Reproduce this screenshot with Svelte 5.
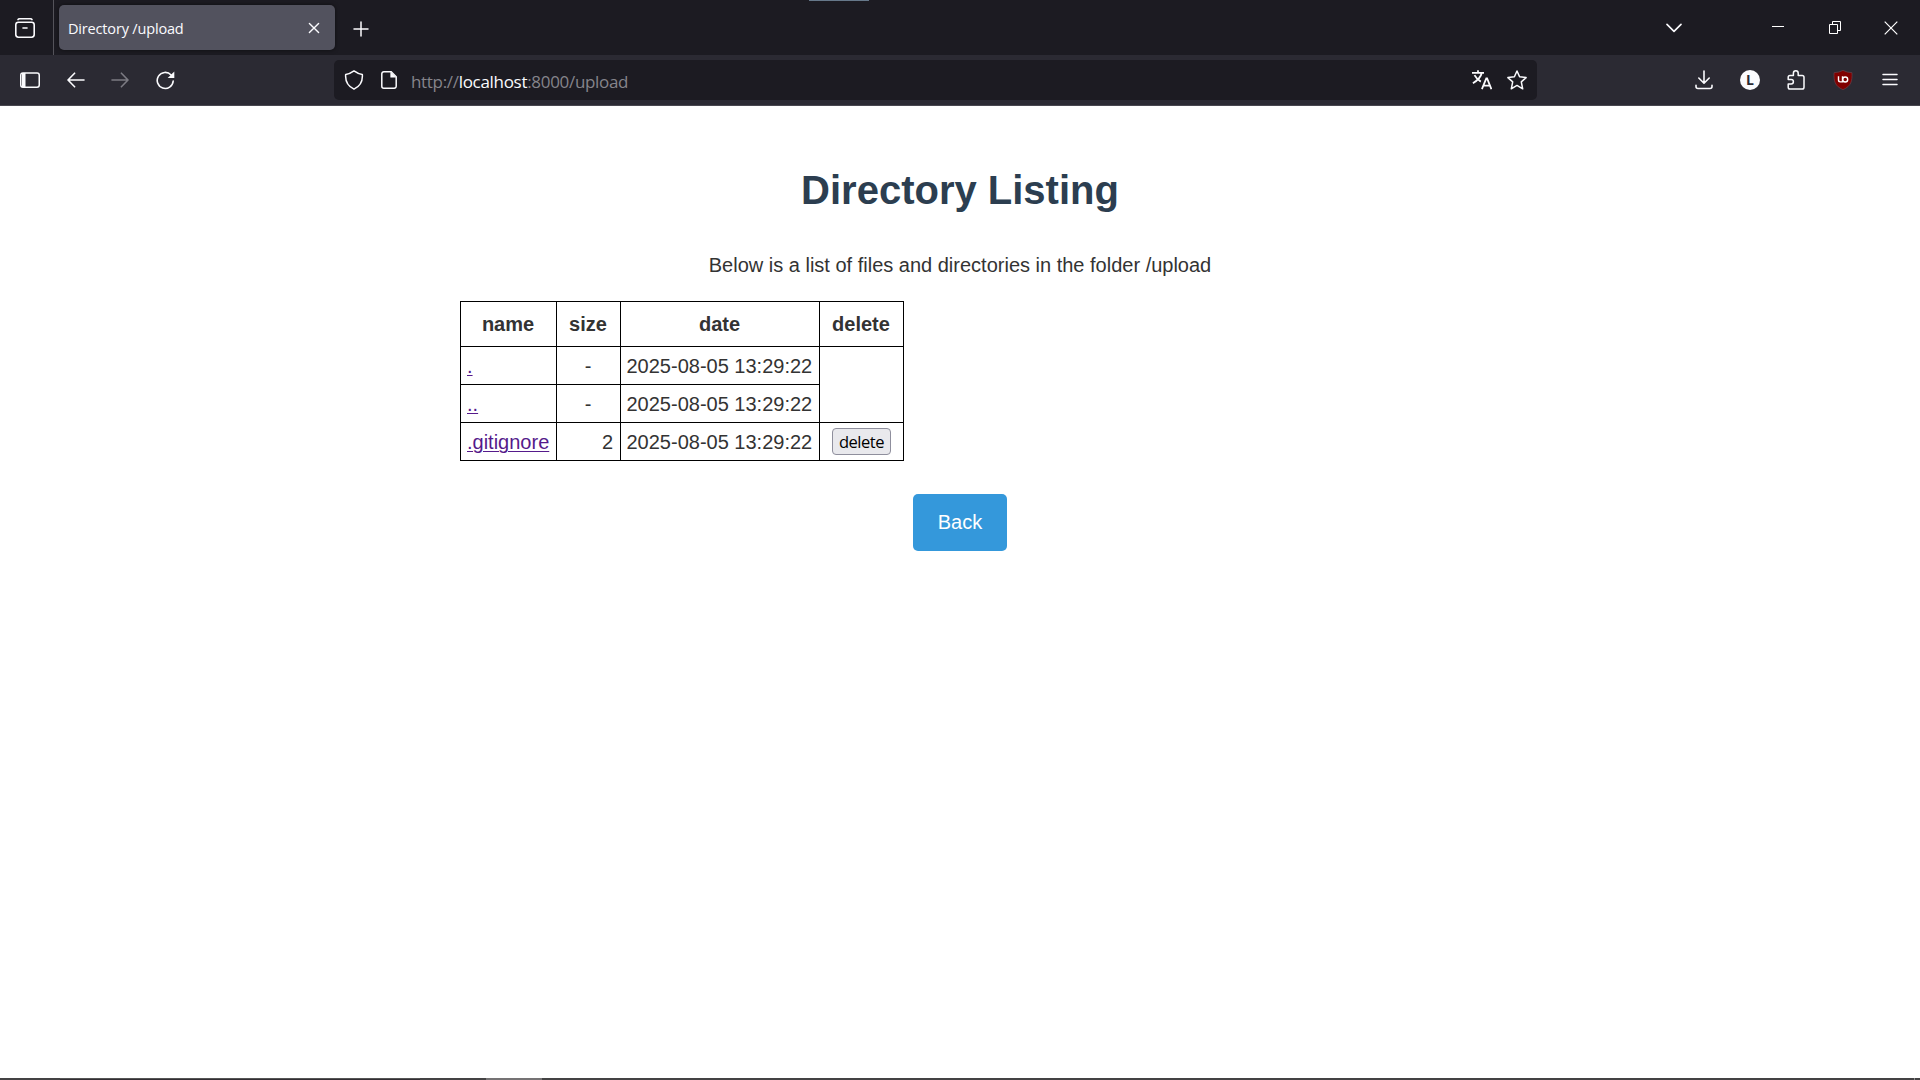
<script>
  const pageTitle = 'Directory /upload';
  const rows = [
    { name: '.', size: '-', date: '2025-08-05 13:29:22' },
    { name: '..', size: '-', date: '2025-08-05 13:29:22' },
    { name: '.gitignore', size: '2', date: '2025-08-05 13:29:22', file: true },
  ];
</script>

<div class="window">
  <header class="tabs">
    <div class="accent"></div>
    <div class="archive">
      <svg width="20" height="20" viewBox="0 0 20 20" fill="none" stroke="#fbfbfe" stroke-width="1.6" stroke-linecap="round">
        <path d="M3 1.6Q3.4.8 4.500.8h11q1.100 0 1.500.8" /><rect x=".8" y="4.200" width="18.400" height="15" rx="2.600" /><path d="M8 10h4" />
      </svg>
    </div>
    <div class="tab">
      <span class="tab-title">{pageTitle}</span>
      <svg width="12" height="12" viewBox="0 0 12 12" stroke="#fbfbfe" stroke-width="1.4" stroke-linecap="round"><path d="M1.400 1.400l9.200 9.200M10.600 1.400l-9.200 9.200" /></svg>
    </div>
    <svg class="plus" width="16" height="16" viewBox="0 0 16 16" stroke="#fbfbfe" stroke-width="1.5" stroke-linecap="round"><path d="M8 1v14M1 8h14" /></svg>
    <div class="window-controls">
      <svg class="chevron" width="16" height="10" viewBox="0 0 16 10" fill="none" stroke="#fbfbfe" stroke-width="1.6" stroke-linecap="round" stroke-linejoin="round"><path d="M1 1.400l7 7 7-7" /></svg>
      <svg class="minimize" width="12" height="13" viewBox="0 0 12 13" stroke="#fff"><path d="M0 5.500h12" /></svg>
      <svg class="restore" width="12" height="13" viewBox="0 0 12 13" fill="none" stroke="#fff"><path d="M.5 3.500h8v9h-8zM3.500 3V.5h8v9H9" /></svg>
      <svg class="close" width="14" height="14" viewBox="0 0 14 14" stroke="#fff" stroke-width="1.2"><path d="M.7.7l12.600 12.600M13.300.7L.7 13.300" /></svg>
    </div>
  </header>

  <nav class="toolbar">
    <div class="nav-buttons">
      <svg width="20" height="16" viewBox="0 0 20 16"><rect x=".75" y=".95" width="18.500" height="14.200" rx="2.200" fill="none" stroke="#fbfbfe" stroke-width="1.5" /><path d="M2 1h3.500v14H2z" fill="#fbfbfe" /></svg>
      <svg width="18" height="16" viewBox="0 0 18 16" fill="none" stroke="#fbfbfe" stroke-width="1.6" stroke-linecap="round" stroke-linejoin="round"><path d="M17 8H1.200M7.600 1.200L1 8l6.600 6.800" /></svg>
      <svg width="18" height="16" viewBox="0 0 18 16" fill="none" stroke="#7c7b83" stroke-width="1.6" stroke-linecap="round" stroke-linejoin="round"><path d="M1 8h15.800M10.400 1.200L17 8l-6.600 6.800" /></svg>
      <svg width="19" height="19" viewBox="0 0 19 19" fill="none" stroke="#fbfbfe" stroke-width="1.6" stroke-linecap="round"><path d="M15.100 4A8 8 0 1 0 17.200 10" /><path d="M18.300.5v6.600h-6.600z" fill="#fbfbfe" stroke="none" /></svg>
    </div>

    <div class="address">
      <svg width="20" height="20" viewBox="0 0 20 20" fill="none" stroke="#fbfbfe" stroke-width="1.5" stroke-linejoin="round"><path d="M10 .9Q14 3.900 18.300 4.400C18.900 11 16 16.200 10 19.200C4 16.200 1.100 11 1.700 4.400Q6 3.900 10 .9Z" /></svg>
      <svg class="page-icon" width="16" height="18" viewBox="0 0 16 18"><path d="M2.800.8h7.400l5 5v9.400a2 2 0 0 1-2 2H2.800a2 2 0 0 1-2-2V2.800a2 2 0 0 1 2-2z" fill="none" stroke="#fbfbfe" stroke-width="1.5" /><path d="M9.400.8v5.800h5.800z" fill="#fbfbfe" /></svg>
      <span class="url">http://<b>localhost</b>:8000/upload</span>
      <svg class="translate" width="20" height="20" viewBox="0 0 20 20" fill="none" stroke="#fbfbfe" stroke-width="1.8"><path d="M0 2.800h12M6 .2v2.600M9.700 3C8.800 7.800 5 10.700.9 13.200M2.500 5.200C4.100 8.200 6 10 8.800 11.600" /><path d="M9.900 19.200L14.300 8.400h.8L19.400 19.200M11.400 15.700h6.700" /></svg>
      <svg width="20" height="20" viewBox="0 0 20 20" fill="none" stroke="#fbfbfe" stroke-width="1.5" stroke-linejoin="round"><path d="M10 1l2.600 5.800 6.500.8-4.800 4.300 1.400 6.900L10 15.400l-5.700 3.400 1.400-6.900L.9 7.600l6.500-.8z" /></svg>
    </div>

    <div class="extensions">
      <svg class="download" width="18" height="20" viewBox="0 0 18 20" fill="none" stroke="#fbfbfe" stroke-width="1.6" stroke-linecap="round" stroke-linejoin="round"><path d="M9 1v12M3.800 8L9 13.200 14.200 8M1 15.200v1.300a2 2 0 0 0 2 2h12a2 2 0 0 0 2-2v-1.300" /></svg>
      <span class="account">L</span>
      <svg class="puzzle" width="18" height="20" viewBox="0 0 18 20" fill="none" stroke="#fbfbfe" stroke-width="1.5" stroke-linejoin="round"><path d="M6.400 5.500V3.200a2.400 2.400 0 0 1 4.800 0v2.300h4a1.800 1.800 0 0 1 1.800 1.800v10a1.800 1.800 0 0 1-1.800 1.800H3a1.800 1.800 0 0 1-1.800-1.800v-3.400h3a2.200 2.200 0 0 0 0-4.400h-3V7.300A1.800 1.800 0 0 1 3 5.500z" /></svg>
      <svg class="shield" width="20" height="20" viewBox="0 0 20 20"><path d="M10 .4Q14 2.500 19 2.700C19.300 11 18.300 16 10 19.700C1.700 16 .7 11 1 2.700Q6 2.500 10 .4z" fill="#800000" stroke="#69404a" stroke-width=".7" /><path d="M5.500 6.200v3.900a1.800 1.800 0 0 0 1.800 1.800h2.200V6.200" fill="none" stroke="#fff" stroke-width="1.400" /><circle cx="12.200" cy="9.500" r="2.500" fill="none" stroke="#fff" stroke-width="1.400" /></svg>
      <svg class="menu" width="16" height="14" viewBox="0 0 16 14" stroke="#fbfbfe" stroke-width="1.5" stroke-linecap="round"><path d="M1 1.500h14M1 6.500h14M1 11.500h14" /></svg>
    </div>
  </nav>

  <main>
    <h1>Directory Listing</h1>
    <p>Below is a list of files and directories in the folder /upload</p>
    <table>
      <colgroup><col class="c-name" /><col class="c-size" /><col class="c-date" /><col class="c-delete" /></colgroup>
      <thead><tr><th>name</th><th>size</th><th>date</th><th>delete</th></tr></thead>
      <tbody>
        {#each rows as row, i}
          <tr>
            <td><a href="#top">{row.name}</a></td>
            <td class={row.file ? 'num' : 'center'}>{row.size}</td>
            <td class="date">{row.date}</td>
            {#if i === 0}<td rowspan="2"></td>{/if}
            {#if row.file}<td class="action"><button class="delete">delete</button></td>{/if}
          </tr>
        {/each}
      </tbody>
    </table>
    <a class="back" href="#top">Back</a>
  </main>
  <footer><i class="edge"></i><i class="search"></i><i class="gap"></i><i class="active"></i><i class="desktop"></i></footer>
</div>

<style>
  :global(body) { margin: 0; background: #fff; }
  .window { width: 1920px; height: 1080px; display: flex; flex-direction: column; overflow: hidden; font-family: "Liberation Sans", Arial, sans-serif; }
  svg { display: block; flex: none; }
  .tabs { height: 55px; flex: none; background: #1c1b22; display: flex; align-items: center; position: relative; }
  .accent { position: absolute; top: 0; left: 809px; width: 60px; height: 1px; background: #66788a; }
  .archive { width: 54px; height: 55px; border-right: 1px solid #54535a; display: flex; align-items: center; padding: 1px 0 0 15px; box-sizing: border-box; flex: none; }
  .tab { margin-left: 5px; width: 276px; height: 45px; box-sizing: border-box; border-radius: 5px; background: #52525e; box-shadow: 0 0 4px #0008; display: flex; align-items: center; justify-content: space-between; padding: 0 15px 0 9px; }
  .tab-title { font: 14.5px/20px "Open Sans", sans-serif; letter-spacing: -.17px; color: #fbfbfe; padding-top: 2px; }
  .plus { margin: 2px 0 0 18px; }
  .window-controls { margin-left: auto; display: flex; align-items: center; padding-right: 22px; }
  .minimize { margin-left: 90px; }
  .restore { margin-left: 45px; }
  .close { margin-left: 43px; }
  .toolbar { height: 51px; flex: none; background: #2b2a33; border-bottom: 1px solid #48474f; box-sizing: border-box; display: flex; align-items: center; padding-left: 20px; }
  .nav-buttons { display: flex; align-items: center; gap: 26.5px; width: 314px; }
  .address { width: 1203px; height: 40px; box-sizing: border-box; border-radius: 5px; background: #1c1b22; display: flex; align-items: center; padding: 0 10px; }
  .page-icon { margin-left: 17px; }
  .url { font: 17px/24px "Open Sans", sans-serif; letter-spacing: -.31px; color: #85848b; margin: 4px 0 0 14px; white-space: nowrap; }
  .url b { font-weight: 400; color: #fbfbfe; }
  .translate { margin: 0 15px 0 auto; }
  .extensions { margin-left: 158px; display: flex; align-items: center; }
  .account { width: 20px; height: 20px; border-radius: 50%; background: #fbfbfe; color: #2b2a33; font: 700 14px/20px "Open Sans", sans-serif; text-align: center; margin-left: 27px; }
  .puzzle { margin-left: 27px; }
  .shield { margin-left: 28px; }
  .menu { margin-left: 29px; }
  main { flex: 1; display: flex; flex-direction: column; align-items: center; font-size: 20px; color: #333; }
  h1 { margin: 61px 0 0; font-size: 40px; line-height: 46px; color: #2c3e50; }
  p { margin: 40px 0 0; line-height: 24px; }
  table { width: 444px; margin: 24px 0 0 460px; align-self: flex-start; border-collapse: collapse; table-layout: fixed; }
  .c-name { width: 96px; }
  .c-size { width: 64px; }
  .c-date { width: 199px; }
  .c-delete { width: 84px; }
  th, td { border: 1px solid #000; padding: 0 6px; line-height: 36px; height: 37px; white-space: nowrap; box-sizing: border-box; }
  th { height: 45px; padding: 0 1px 0 0; }
  tbody tr { height: 38px; }
  td a { color: #551a8b; text-underline-offset: 2px; text-decoration-thickness: 1px; }
  .center { text-align: center; padding-right: 7px; }
  .num { text-align: right; padding-right: 7px; }
  .date { padding-left: 5.5px; }
  .action { padding: 0; text-align: center; }
  .delete { display: block; margin: 0 auto; width: 59px; height: 27px; padding: 1px 0 0; border: 1px solid #8f8f9d; border-radius: 4px; background: #e9e9ed; font: 16.5px/24px "Open Sans", sans-serif; letter-spacing: -.45px; color: #000; }
  .back { margin-top: 33px; width: 94px; height: 57px; border-radius: 5px; background: #3498db; color: #fff; text-decoration: none; text-align: center; line-height: 57px; }
  footer { height: 2px; flex: none; display: flex; background: #444344; }
  footer i { display: block; height: 2px; }
  .edge { width: 60px; }
  .search { width: 360px; background: #332e33; box-shadow: inset 0 1px #555; }
  .gap { width: 66px; }
  .active { width: 56px; background: #757374; }
  .desktop { width: 1px; margin: 0 5px 0 auto; background: #8b898a; }
</style>
